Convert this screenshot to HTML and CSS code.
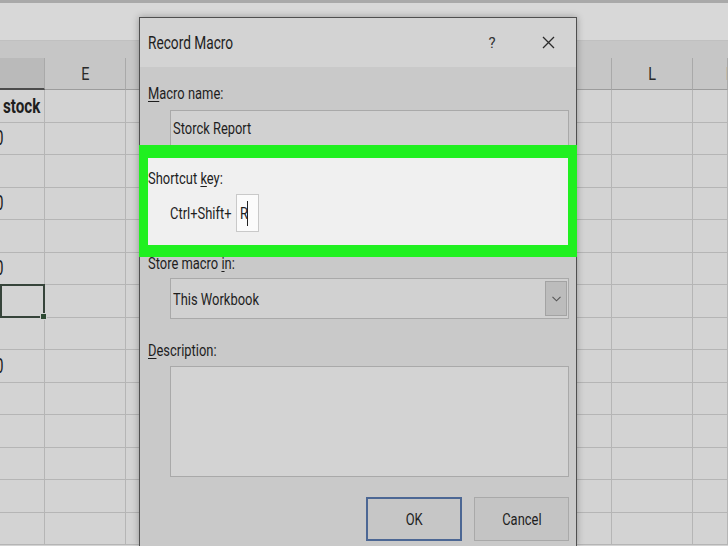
FILE: index.html
```html
<!DOCTYPE html>
<html>
<head>
  <meta name="viewport" content="width=device-width, initial-scale=1.0">
  <link rel="stylesheet" href="styles.css">
</head>
<body>

  <!-- Worksheet behind the dialog -->
  <div class="sheet">
    <div class="ribbon"></div>

    <div class="colhead">
      <div class="h sel"></div>
      <div class="h"><span class="sq mid">E</span></div>
      <div class="h"><span class="sq mid">F</span></div>
      <div class="h"><span class="sq mid">G</span></div>
      <div class="h"><span class="sq mid">H</span></div>
      <div class="h"><span class="sq mid">I</span></div>
      <div class="h"><span class="sq mid">J</span></div>
      <div class="h"><span class="sq mid">K</span></div>
      <div class="h"><span class="sq mid">L</span></div>
      <div class="h last"><span class="sq mid">M</span></div>
    </div>

    <div class="grid">
      <div class="c first head"><span class="sq">stock</span></div><div class="c"></div><div class="c"></div><div class="c"></div><div class="c"></div><div class="c"></div><div class="c"></div><div class="c"></div><div class="c"></div><div class="c"></div>
      <div class="c first num"><span class="sq">0</span></div><div class="c"></div><div class="c"></div><div class="c"></div><div class="c"></div><div class="c"></div><div class="c"></div><div class="c"></div><div class="c"></div><div class="c"></div>
      <div class="c first"></div><div class="c"></div><div class="c"></div><div class="c"></div><div class="c"></div><div class="c"></div><div class="c"></div><div class="c"></div><div class="c"></div><div class="c"></div>
      <div class="c first num"><span class="sq">0</span></div><div class="c"></div><div class="c"></div><div class="c"></div><div class="c"></div><div class="c"></div><div class="c"></div><div class="c"></div><div class="c"></div><div class="c"></div>
      <div class="c first"></div><div class="c"></div><div class="c"></div><div class="c"></div><div class="c"></div><div class="c"></div><div class="c"></div><div class="c"></div><div class="c"></div><div class="c"></div>
      <div class="c first num"><span class="sq">0</span></div><div class="c"></div><div class="c"></div><div class="c"></div><div class="c"></div><div class="c"></div><div class="c"></div><div class="c"></div><div class="c"></div><div class="c"></div>
      <div class="c first active"><span class="handle"></span></div><div class="c"></div><div class="c"></div><div class="c"></div><div class="c"></div><div class="c"></div><div class="c"></div><div class="c"></div><div class="c"></div><div class="c"></div>
      <div class="c first"></div><div class="c"></div><div class="c"></div><div class="c"></div><div class="c"></div><div class="c"></div><div class="c"></div><div class="c"></div><div class="c"></div><div class="c"></div>
      <div class="c first num"><span class="sq">0</span></div><div class="c"></div><div class="c"></div><div class="c"></div><div class="c"></div><div class="c"></div><div class="c"></div><div class="c"></div><div class="c"></div><div class="c"></div>
      <div class="c first"></div><div class="c"></div><div class="c"></div><div class="c"></div><div class="c"></div><div class="c"></div><div class="c"></div><div class="c"></div><div class="c"></div><div class="c"></div>
      <div class="c first"></div><div class="c"></div><div class="c"></div><div class="c"></div><div class="c"></div><div class="c"></div><div class="c"></div><div class="c"></div><div class="c"></div><div class="c"></div>
      <div class="c first"></div><div class="c"></div><div class="c"></div><div class="c"></div><div class="c"></div><div class="c"></div><div class="c"></div><div class="c"></div><div class="c"></div><div class="c"></div>
      <div class="c first"></div><div class="c"></div><div class="c"></div><div class="c"></div><div class="c"></div><div class="c"></div><div class="c"></div><div class="c"></div><div class="c"></div><div class="c"></div>
      <div class="c first"></div><div class="c"></div><div class="c"></div><div class="c"></div><div class="c"></div><div class="c"></div><div class="c"></div><div class="c"></div><div class="c"></div><div class="c"></div>
    </div>
  </div>

  <!-- Record Macro dialog -->
  <div class="dialog">
    <div class="titlebar">
      <span class="title"><span class="sq">Record Macro</span></span>
      <span class="tb-btn help">?</span>
      <span class="tb-btn">
        <svg width="13" height="13" viewBox="0 0 13 13"><path d="M1 1 L12 12 M12 1 L1 12" stroke="#2b2b2b" stroke-width="1.3" fill="none"/></svg>
      </span>
    </div>

    <div class="dlg-body">
      <div class="field-label"><span class="sq"><u>M</u>acro name:</span></div>
      <div class="textbox"><span class="sq">Storck Report</span></div>

      <div class="shortcut">
        <div class="field-label tight"><span class="sq">Shortcut <u>k</u>ey:</span></div>
        <div class="key-row">
          <span class="sq">Ctrl+Shift+</span>
          <div class="keybox"><span class="sq">R</span><span class="caret"></span></div>
        </div>
      </div>

      <div class="field-label under"><span class="sq">Store macro <u>i</u>n:</span></div>
      <div class="dropdown">
        <span class="dd-text"><span class="sq">This Workbook</span></span>
        <span class="dd-btn">
          <svg width="9" height="6" viewBox="0 0 9 6"><path d="M0.5 0.8 L4.5 4.8 L8.5 0.8" stroke="#555" stroke-width="1.1" fill="none"/></svg>
        </span>
      </div>

      <div class="field-label desc"><span class="sq"><u>D</u>escription:</span></div>
      <div class="textarea"></div>

      <div class="buttons">
        <div class="btn ok"><span class="sq mid">OK</span></div>
        <div class="btn"><span class="sq mid">Cancel</span></div>
      </div>
    </div>
  </div>

</body>
</html>
```

FILE: styles.css
```css
body {
  margin: 0;
  width: 728px;
  height: 546px;
  overflow: hidden;
  position: relative;
  background: #d3d3d3;
  font-family: Roboto, "Liberation Sans", sans-serif;
  color: #1e1e1e;
}

/* squeezed text, the screenshot is narrow */
.sq {
  display: inline-block;
  white-space: nowrap;
  transform: scaleX(.76);
  transform-origin: left center;
}

.sq.mid {
  transform-origin: center;
}

/* ---------- worksheet ---------- */
.sheet {
  display: flex;
  flex-direction: column;
  height: 546px;
  overflow: hidden;
}

.ribbon {
  flex-shrink: 0;
  height: 37px;
  border-top: 3px solid #a9a9a9;
  background: #d8d8d8;
}

.colhead {
  flex-shrink: 0;
  display: grid;
  grid-template-columns: 45px repeat(8, 81px) 35px;
  padding-top: 17px;
  background: #c6c6c6;
  border-top: 1px solid #c0c0c0;
}

.h {
  height: 31px;
  border-right: 1px solid #a9a9a9;
  border-bottom: 1px solid #9c9c9c;
  display: flex;
  align-items: center;
  justify-content: center;
  font-size: 19px;
  color: #2a2a2a;
  overflow: hidden;
}

.h.sel {
  background: #bababa;
  height: 30px;
  border-bottom: 2px solid #4b4b4b;
}

.h.last {
  justify-content: flex-start;
  padding-left: 31px;
}

.grid {
  display: grid;
  grid-template-columns: 45px repeat(8, 81px) 35px;
  grid-auto-rows: 32.5px;
}

.c {
  border-right: 1px solid #b5b5b5;
  border-bottom: 1px solid #b5b5b5;
  display: flex;
  align-items: center;
  overflow: hidden;
  font-size: 20px;
  color: #1e1e1e;
}

.c.head {
  font-weight: bold;
  padding-left: 3px;
}

.c.num span {
  margin-left: -5px;
}

.c.active {
  position: relative;
  overflow: visible;
  border: 2px solid #36443a;
  margin-top: -1px;
}

.handle {
  position: absolute;
  right: -4px;
  bottom: -4px;
  width: 5px;
  height: 5px;
  background: #2d4a33;
  border: 1px solid #d3d3d3;
}

/* ---------- dialog ---------- */
.dialog {
  position: absolute;
  left: 139px;
  top: 17px;
  width: 438px;
  height: 529px;
  box-sizing: border-box;
  border: 1px solid #4f4f4f;
  border-bottom: none;
  background: #c9c9c9;
  box-shadow: 0 0 7px rgba(0, 0, 0, 0.3);
}

.titlebar {
  height: 49px;
  display: flex;
  align-items: center;
  padding-left: 8px;
  background: #d3d3d3;
  font-size: 18px;
}

.title {
  flex: 1;
}

.tb-btn {
  width: 56px;
  display: flex;
  justify-content: center;
  align-items: center;
}

.help {
  font-size: 15px;
  color: #333;
}

.dlg-body {
  padding: 0 7px 0 8px;
  font-size: 17px;
}

.field-label {
  margin-top: 15px;
  height: 22px;
  line-height: 22px;
}

.field-label u {
  text-decoration-thickness: 1px;
  text-underline-offset: 2px;
}

.textbox {
  margin: 6px 0 0 22px;
  height: 35px;
  box-sizing: border-box;
  border: 1px solid #a9a9a9;
  border-bottom: none;
  background: #d1d1d1;
  padding-left: 2px;
  display: flex;
  align-items: center;
}

/* green highlight around the shortcut key */
.shortcut {
  position: relative;
  z-index: 1;
  margin: 0 -8px 0 -9px;
  border-style: solid;
  border-color: #20f020;
  border-width: 13px 9px 12px 9px;
  background: #f0f0f0;
  padding: 9px 0 13px 0;
}

.field-label.tight {
  margin-top: 0;
}

.key-row {
  margin-top: 5px;
  padding-left: 22px;
  height: 38px;
  display: flex;
  align-items: center;
}

/* the label is squeezed, pull the box back to its edge */
.keybox {
  margin-left: -15px;
  width: 23px;
  height: 38px;
  box-sizing: border-box;
  border: 1px solid #c9c9c9;
  background: #fbfbfb;
  padding-left: 3px;
  display: flex;
  align-items: center;
}

.caret {
  width: 1px;
  height: 25px;
  margin-left: -3px;
  background: #222;
}

.field-label.under {
  margin-top: -5px;
}

.dropdown {
  margin: 4px 0 0 22px;
  height: 41px;
  box-sizing: border-box;
  border: 1px solid #a9a9a9;
  background: #d1d1d1;
  padding: 2px 1px 2px 2px;
  display: flex;
}

.dd-text {
  flex: 1;
  display: flex;
  align-items: center;
}

.dd-btn {
  width: 20px;
  border: 1px solid #a3a3a3;
  background: #bcbcbc;
  display: flex;
  align-items: center;
  justify-content: center;
}

.field-label.desc {
  margin-top: 20px;
}

.textarea {
  margin: 5px 0 0 22px;
  height: 111px;
  box-sizing: border-box;
  border: 1px solid #a9a9a9;
  background: #d3d3d3;
}

.buttons {
  margin-top: 20px;
  display: flex;
  justify-content: flex-end;
  gap: 12px;
}

.btn {
  width: 95px;
  height: 44px;
  box-sizing: border-box;
  border: 1px solid #a9a9a9;
  background: #c4c4c4;
  display: flex;
  align-items: center;
  justify-content: center;
}

.btn.ok {
  width: 96px;
  border: 2px solid #4c6794;
  background: #c6c6c6;
}
```
